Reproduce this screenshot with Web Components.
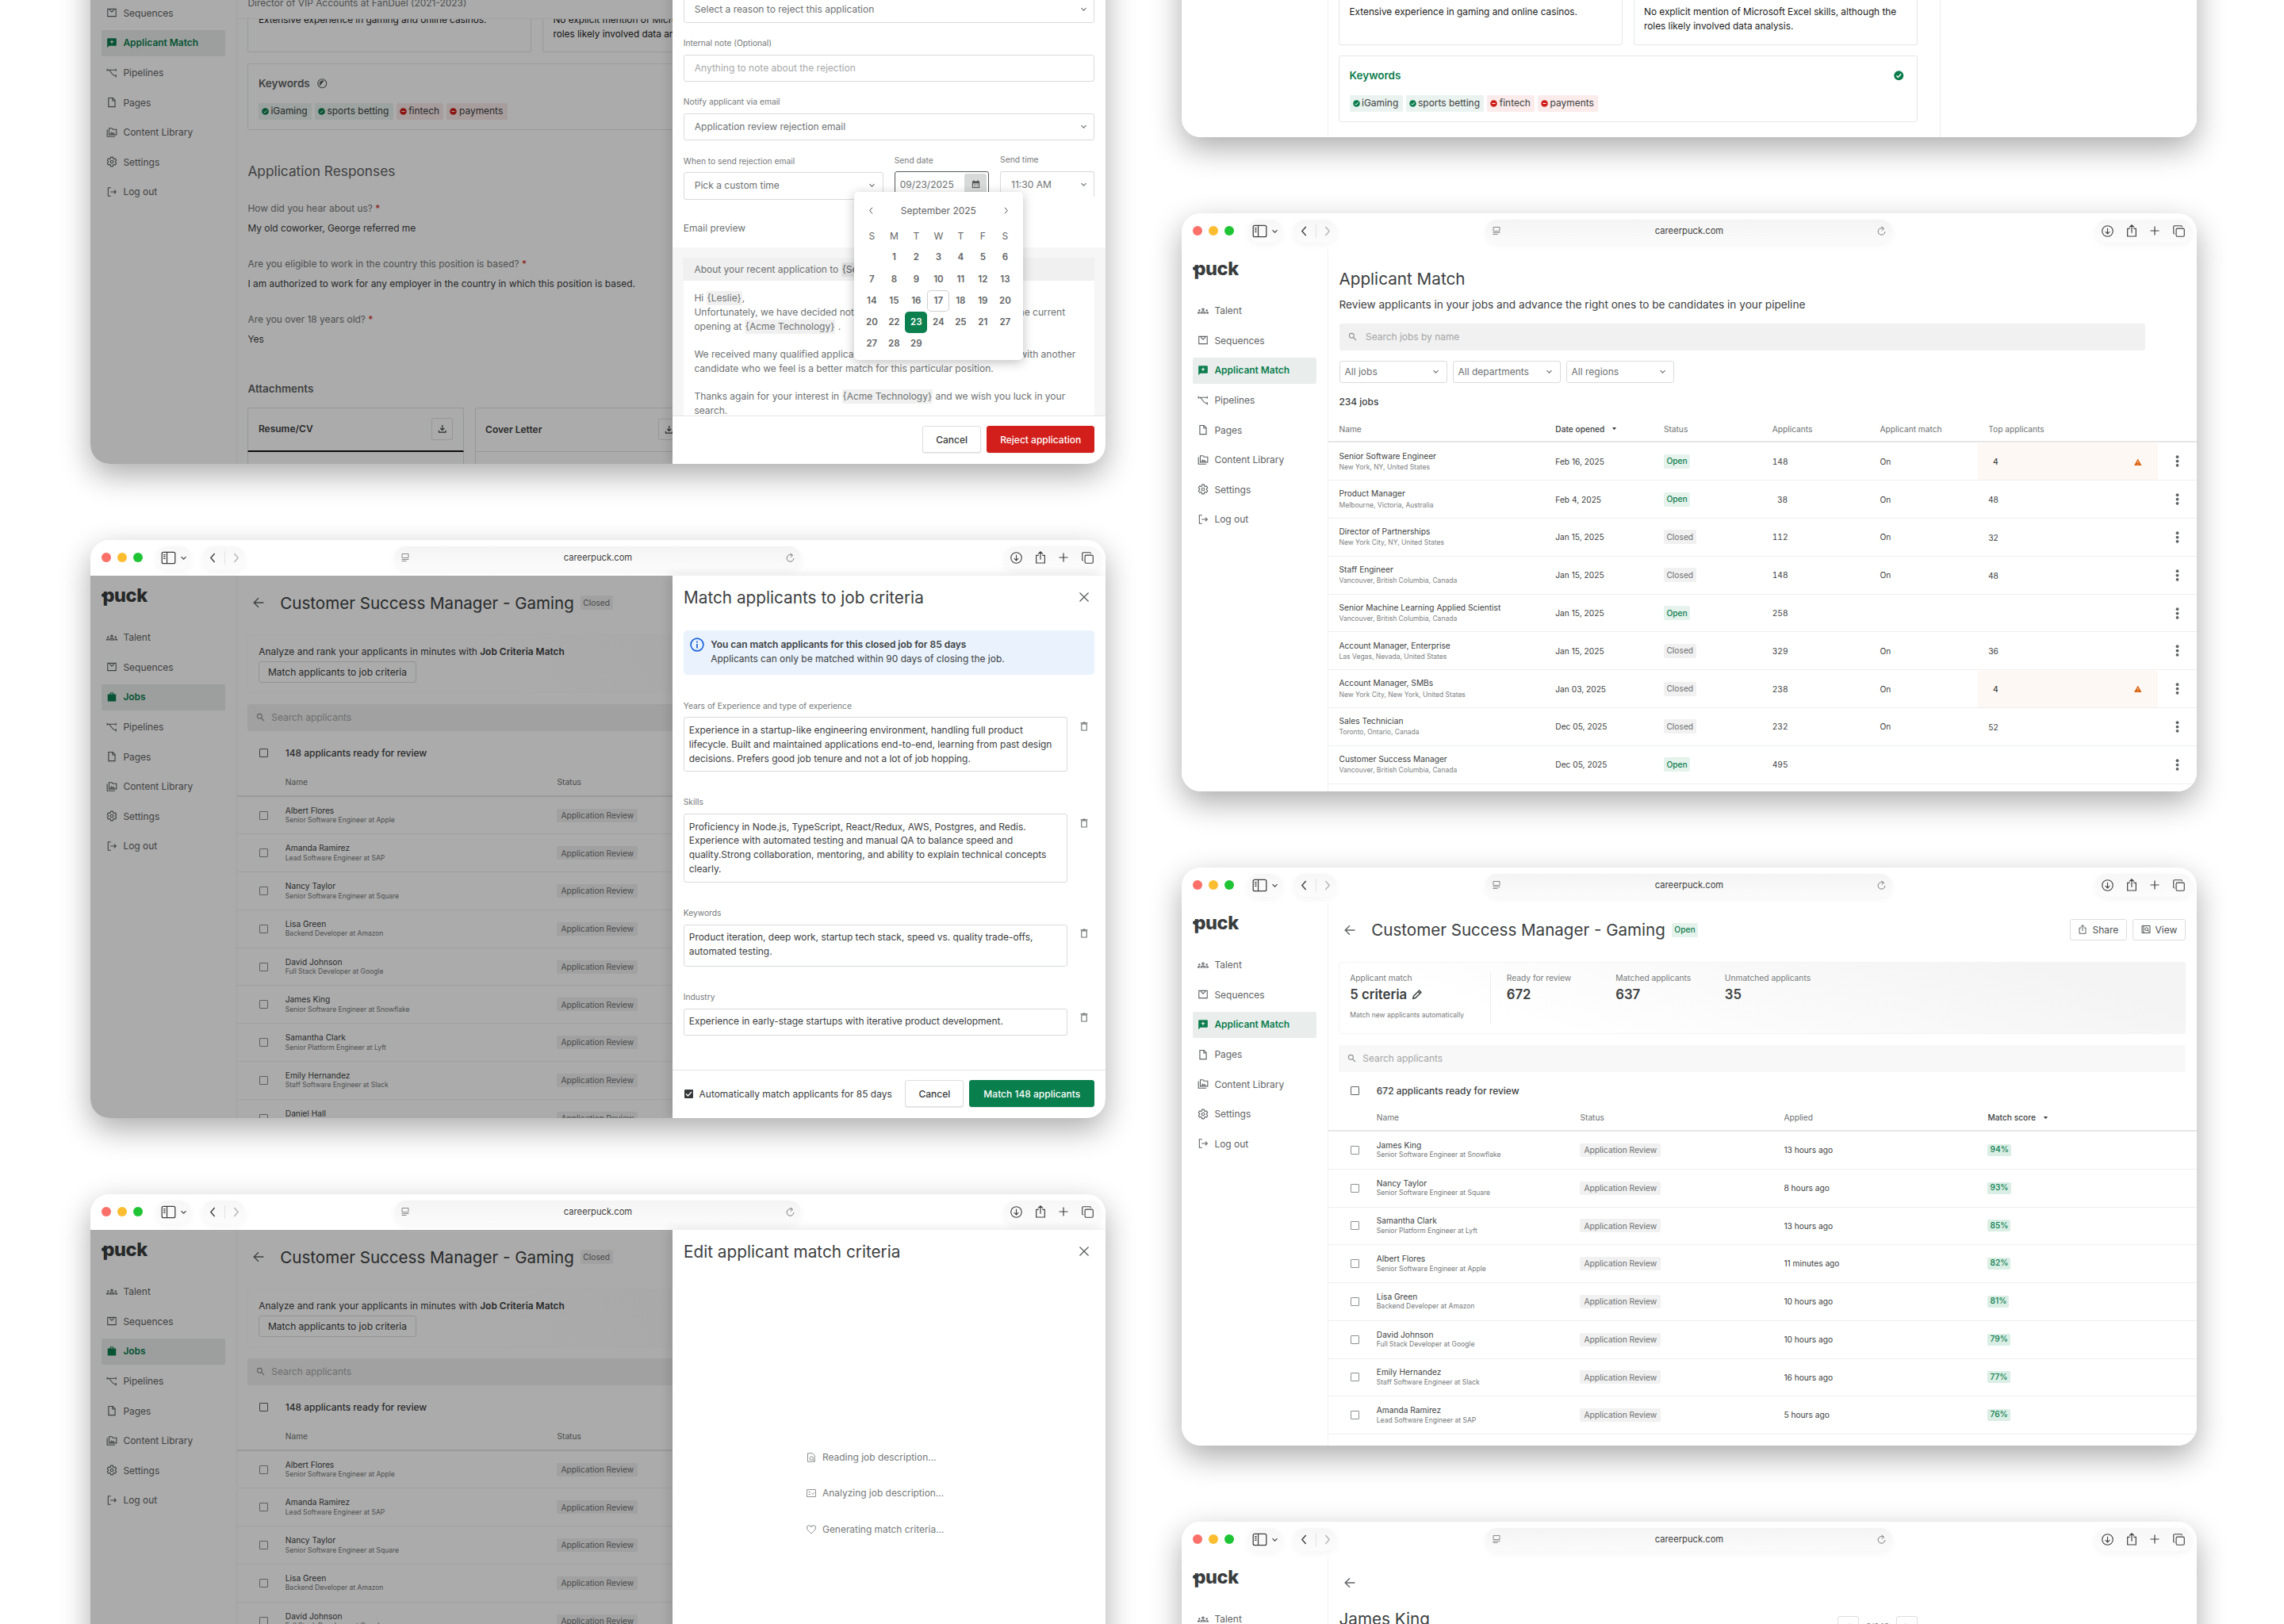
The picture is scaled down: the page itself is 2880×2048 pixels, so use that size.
<!DOCTYPE html>
<html lang="en">
<head>
<meta charset="utf-8">
<title>Puck</title>
<style>
    body {
        margin: 0;
        width: 2880px;
        height: 2048px;
        overflow: hidden;
        background: #fff;
        font-family: Inter, "Liberation Sans", sans-serif;
        color: #3c4041;
    }

    screen-board {
        --green: #0b7d4d;
        --ink: #3c4041;
        --muted: #75797a;
        --line: #d9dadb;
    }
</style>
</head>
<body>

<screen-board>
    <browser-window slot="left">
        <side-nav active="Applicant Match"></side-nav>
        <application-page></application-page>
        <side-drawer slot="overlay">
            <reject-form></reject-form>
            <push-button slot="footer" style="width: 73.7px">Cancel</push-button>
            <push-button slot="footer" kind="danger" style="width: 136.4px">Reject application</push-button>
        </side-drawer>
    </browser-window>

    <browser-window slot="left">
        <side-nav active="Jobs"></side-nav>
        <job-page state="closed"></job-page>
        <side-drawer slot="overlay" heading="Match applicants to job criteria">
            <criteria-form></criteria-form>
            <check-label slot="footer">Automatically match applicants for 85 days</check-label>
            <push-button slot="footer" style="width: 73.8px">Cancel</push-button>
            <push-button slot="footer" kind="primary" style="width: 158.2px">Match 148 applicants</push-button>
        </side-drawer>
    </browser-window>

    <browser-window slot="left">
        <side-nav active="Jobs"></side-nav>
        <job-page state="closed"></job-page>
        <side-drawer slot="overlay" heading="Edit applicant match criteria">
            <progress-steps></progress-steps>
        </side-drawer>
    </browser-window>

    <browser-window slot="right">
        <side-nav active="Applicant Match"></side-nav>
        <evaluation-page></evaluation-page>
    </browser-window>

    <browser-window slot="right">
        <side-nav active="Applicant Match"></side-nav>
        <match-page></match-page>
    </browser-window>

    <browser-window slot="right">
        <side-nav active="Applicant Match" hide="Pipelines"></side-nav>
        <job-page state="open"></job-page>
    </browser-window>

    <browser-window slot="right">
        <side-nav active="Applicant Match"></side-nav>
        <profile-page></profile-page>
    </browser-window>
</screen-board>

<script>
// Every element renders once, from its attributes, into an open shadow root
class PuckElement extends HTMLElement {
    connectedCallback() {
        if (this.shadowRoot) return
        const shadowRoot = this.attachShadow({mode: "open"})
        shadowRoot.innerHTML = /* html */`
            <style>
                :host { display: block; box-sizing: border-box; }
                * { box-sizing: border-box; }
                p, h1, h2, h3 { margin: 0; font-weight: 400; }
            </style>
            ${this.render()}
        `
    }
}

const stroke = (d, width = 2) =>
    `<path d="${d}" fill="none" stroke="currentColor" stroke-width="${width}"/>`

const GEAR = "M19.43 12.98c.04-.32.07-.64.07-.98 0-.34-.03-.66-.07-.98l2.11-1.65c.19-.15.24-.42.12-.64l-2-3.46c-.09-.16-.26-.25-.44-.25-.06 0-.12.01-.17.03l-2.49 1c-.52-.4-1.08-.73-1.69-.98l-.38-2.65C14.46 2.18 14.25 2 14 2h-4c-.25 0-.46.18-.49.42l-.38 2.65c-.61.25-1.17.59-1.69.98l-2.49-1c-.06-.02-.12-.03-.18-.03-.17 0-.34.09-.43.25l-2 3.46c-.13.22-.07.49.12.64l2.11 1.65c-.04.32-.07.65-.07.98 0 .33.03.66.07.98l-2.11 1.65c-.19.15-.24.42-.12.64l2 3.46c.09.16.26.25.44.25.06 0 .12-.01.17-.03l2.49-1c.52.4 1.08.73 1.69.98l.38 2.65c.03.24.24.42.49.42h4c.25 0 .46-.18.49-.42l.38-2.65c.61-.25 1.17-.59 1.69-.98l2.49 1c.06.02.12.03.18.03.17 0 .34-.09.43-.25l2-3.46c.12-.22.07-.49-.12-.64l-2.11-1.65z"

const ICONS = {
    talent: `<path fill-rule="evenodd" d="M12 12.75c1.63 0 3.07.39 4.24.9 1.08.48 1.76 1.56 1.76 2.73V18H6v-1.61c0-1.18.68-2.26 1.76-2.73 1.17-.52 2.61-.91 4.24-.91zM4 13c1.1 0 2-.9 2-2s-.9-2-2-2-2 .9-2 2 .9 2 2 2zm1.13 1.1c-.37-.06-.74-.1-1.13-.1-.99 0-1.93.21-2.78.58C.48 14.9 0 15.62 0 16.43V18h4.5v-1.61c0-.83.23-1.61.63-2.29zM20 13c1.1 0 2-.9 2-2s-.9-2-2-2-2 .9-2 2 .9 2 2 2zm4 3.43c0-.81-.48-1.53-1.22-1.85-.85-.37-1.79-.58-2.78-.58-.39 0-.76.04-1.13.1.4.68.63 1.46.63 2.29V18H24v-1.57zM12 6c1.66 0 3 1.34 3 3s-1.34 3-3 3-3-1.34-3-3 1.34-3 3-3zM8.07 16.2c.2-.5 2-1.4 3.93-1.4s3.7.9 3.93 1.4H8.07zM12 8c.55 0 1 .45 1 1s-.45 1-1 1-1-.45-1-1 .45-1 1-1z"/>`,
    sequences: stroke("M3 4h18v16H3zM7 5.500l5 5 5-5", 1.9),
    match: `<path fill-rule="evenodd" d="M20 2H4c-1.100 0-2 .9-2 2v18.500l4-4h14c1.100 0 2-.9 2-2V4c0-1.100-.9-2-2-2zM12 5l1.300 3.700L17 10l-3.700 1.300L12 15l-1.300-3.700L7 10l3.700-1.300z"/>`,
    jobs: `<path d="M20 6h-4V4c0-1.110-.89-2-2-2h-4c-1.110 0-2 .89-2 2v2H3v15.500h18V6zm-6 0h-4V4h4v2z"/>`,
    pipelines: stroke("M2 3v5M2 5.500h19M21 3v5M5 5.500c5 1 7 13 16 13M21 15.500v6", 1.9),
    pages: stroke("M5 2.500h9l5 5V21.500H5zM13.500 3v5.500H19", 2),
    library: stroke("M2 6v15h17M6 3h6l2 2.500h8V17H6z", 1.9) + `<path d="M8 15l3.200-4.500 2.300 3 1.800-2 3.200 3.500z"/>`,
    settings: stroke(GEAR, 1.9) + `<circle cx="12" cy="12" r="3" fill="none" stroke="currentColor" stroke-width="1.900"/>`,
    logout: stroke("M10 3H4v18h6M9 12h12M17 8l4 4-4 4", 1.9),
    sidebar: `<rect x="1.500" y="3" width="21" height="18" rx="2.500" fill="none" stroke="currentColor" stroke-width="1.600"/>` + stroke("M9.500 3v18M4 7h3M4 10h3M4 13h3", 1.6),
    reader: stroke("M4 3h16v10H4zM3 17h18M3 21h12", 1.7),
    reload: stroke("M17 6.500A8 8 0 1 0 20 13M12 1.500l5.500 4.500-5 4.500", 1.8),
    download: `<circle cx="12" cy="12" r="10.800" fill="none" stroke="currentColor" stroke-width="1.800"/>` + stroke("M12 6v11M7.500 13l4.500 4.500 4.500-4.500", 1.8),
    share: stroke("M8.500 8H4v14.500h16V8h-4.500M12 16V1.500M7.500 5.500L12 1.200l4.500 4.300", 1.8),
    plus: stroke("M12 1v22M1 12h22", 2.4),
    tabs: `<rect x="6.500" y="6.500" width="16.300" height="16.300" rx="2.500" fill="none" stroke="currentColor" stroke-width="1.800"/>` + stroke("M3.500 17.500H3a1.800 1.800 0 0 1-1.800-1.800V3A1.800 1.800 0 0 1 3 1.200h13.500A1.800 1.800 0 0 1 18.300 3v.5", 1.8),
    left: stroke("M16 2L7 12l9 10", 2.6),
    right: stroke("M8 2l9 10-9 10", 2.6),
    down: stroke("M4 8.500l8 8 8-8", 3.2),
    back: stroke("M23 12H2.500M12 2L2 12l10 10", 2.3),
    close: stroke("M2.500 2.500l19 19M21.500 2.500l-19 19", 2.1),
    search: `<circle cx="9.500" cy="9.500" r="6.500" fill="none" stroke="currentColor" stroke-width="2.200"/>` + stroke("M14.500 14.500L22 22", 2.6),
    trash: stroke("M5.500 6h13v16h-13zM3 3.500h18M9 2h6", 2.2),
    info: `<circle cx="12" cy="12" r="10.500" fill="none" stroke="currentColor" stroke-width="2.200"/>` + stroke("M12 10.500V18M12 6v2.500", 2.3),
    tick: `<circle cx="12" cy="12" r="11.500"/><path d="M6.500 12.500l3.800 3.800 7.200-8" fill="none" stroke="#fff" stroke-width="2.600"/>`,
    minus: `<circle cx="12" cy="12" r="11.500"/><path d="M6.500 12h11" stroke="#fff" stroke-width="2.600"/>`,
    partial: `<circle cx="12" cy="12" r="10.500" fill="none" stroke="currentColor" stroke-width="2.200"/><path d="M6 17c-2-5 0-11 6-12h5.500L6 18z"/>`,
    save: stroke("M12 2v13M6.500 10l5.500 5.500 5.500-5.500M3 16v5h18v-5", 2.4),
    calendar: `<path fill-rule="evenodd" d="M5 1h3v2h8V1h3v2h3v19H2V3h3zM4.300 9v10.700h15.400V9z"/>` + stroke("M6.500 12h2M11 12h2M15.500 12h2M6.500 16.500h2M11 16.500h2M15.500 16.500h2", 2.3),
    pencil: stroke("M3 21l1.200-5.200L16.500 3.500l4 4L8.200 19.800zM14 6l4 4", 2.4),
    view: stroke("M2 3h20v18H2zM6 3v18M20 18.500l-4-4.500", 2) + `<circle cx="13.500" cy="11.500" r="3.800" fill="none" stroke="currentColor" stroke-width="2"/>`,
    reading: stroke("M3 1.500h12l5.500 5.500v15.500H3zM20 21.500l-4-4", 1.9) + `<circle cx="12.500" cy="14" r="4.300" fill="none" stroke="currentColor" stroke-width="1.900"/>`,
    analyzing: stroke("M1 3h22v18H1zM5 9h5M5 15h5M13 12.500l2.500 2.500 4.500-5", 1.8),
    heart: stroke("M12 22C5 15.500 1 12 1 8A5.500 5.500 0 0 1 12 6a5.500 5.500 0 0 1 11 2c0 4-4 7.500-11 14z", 1.9),
    warning: `<path d="M12 1.500l12 21H0z"/><path d="M12 9v6M12 17.500v2.500" stroke="#fff" stroke-width="2"/>`,
    sort: `<path d="M3 7h18l-9 11z"/>`,
    dots: `<circle cx="12" cy="3.500" r="3"/><circle cx="12" cy="12" r="3"/><circle cx="12" cy="20.500" r="3"/>`
}

customElements.define("puck-icon", class extends PuckElement {
    render() {
        const size = this.getAttribute("size") || 14
        return /* html */`
            <style>
                :host { flex: none; width: ${size}px; height: ${size}px; }
                svg { display: block; overflow: visible; }
            </style>
            <svg width="${size}" height="${size}" viewBox="0 0 24 24" fill="currentColor">${ICONS[this.getAttribute("name")]}</svg>
        `
    }
})

customElements.define("screen-board", class extends PuckElement {
    render() {
        return /* html */`
            <style>
                :host {
                    display: grid;
                    grid-template-columns: 1280px 1280px;
                    column-gap: 96px;
                    padding-left: 114px;
                    height: 2048px;
                    overflow: hidden;
                }
                div { display: flex; flex-direction: column; gap: 96px; }
                .left { margin-top: -144px; }
                .right { margin-top: -556px; }
            </style>
            <div class="left"><slot name="left"></slot></div>
            <div class="right"><slot name="right"></slot></div>
        `
    }
})

customElements.define("browser-window", class extends PuckElement {
    render() {
        return /* html */`
            <style>
                :host {
                    flex: none;
                    height: 729px;
                    border-radius: 24px;
                    box-shadow: 0 14px 38px rgba(0, 0, 0, .33);
                }
                .frame { height: 729px; border-radius: 24px; overflow: hidden; background: #fff; }
                header {
                    display: flex;
                    align-items: center;
                    height: 45px;
                    padding: 0 6px 1px 14.400px;
                    color: #404040;
                }
                .lights { display: flex; gap: 7.600px; width: 68.600px; }
                .lights i { width: 12px; height: 12px; border-radius: 50%; background: #fb7069; }
                .lights i:nth-child(2) { background: #fdbd30; }
                .lights i:nth-child(3) { background: #1fc435; }
                .pill {
                    display: flex;
                    align-items: center;
                    height: 29px;
                    border-radius: 15px;
                    background: linear-gradient(#f7f7f7, #fcfcfc);
                    box-shadow: 0 3px 10px rgba(0, 0, 0, .045);
                }
                .panel { width: 44.500px; padding-left: 6.500px; gap: 5px; }
                .history { width: 54px; margin-left: 14px; padding-left: 7px; gap: 7.300px; }
                .history i { width: 1px; height: 17px; background: #e4e4e4; }
                .forward { color: #b5b5b5; }
                .address {
                    width: 513px;
                    margin-left: 188px;
                    padding: 0 7px 0 8px;
                    justify-content: space-between;
                    font-size: 11.200px;
                    color: #404040;
                    background: linear-gradient(#f4f4f4, #fbfbfb);
                }
                .address puck-icon { color: #777; }
                .actions { width: 122px; margin-left: auto; padding: 0 9.500px 0 7.500px; gap: 15px; }
                .actions puck-icon:nth-child(3) { margin: 0 1.500px 0 .5px; }
                .body { position: relative; display: flex; height: 684px; }
                ::slotted(:not(side-nav):not(side-drawer)) { flex: 1; min-width: 0; }
            </style>
            <div class="frame">
                <header>
                    <div class="lights"><i></i><i></i><i></i></div>
                    <div class="pill panel"><puck-icon name="sidebar" size="19"></puck-icon><puck-icon name="down" size="9"></puck-icon></div>
                    <div class="pill history">
                        <puck-icon name="left" size="13"></puck-icon><i></i>
                        <puck-icon class="forward" name="right" size="13"></puck-icon>
                    </div>
                    <div class="pill address">
                        <puck-icon name="reader" size="12"></puck-icon>
                        <span>careerpuck.com</span>
                        <puck-icon name="reload" size="13"></puck-icon>
                    </div>
                    <div class="pill actions">
                        <puck-icon name="download" size="15"></puck-icon>
                        <puck-icon name="share" size="16"></puck-icon>
                        <puck-icon name="plus" size="12"></puck-icon>
                        <puck-icon name="tabs" size="15"></puck-icon>
                    </div>
                </header>
                <div class="body">
                    <slot></slot>
                    <slot name="overlay"></slot>
                </div>
            </div>
        `
    }
})

customElements.define("side-nav", class extends PuckElement {
    render() {
        const active = this.getAttribute("active")
        const hidden = this.getAttribute("hide")
        const items = [
            ["talent", "Talent"],
            ["sequences", "Sequences"],
            active === "Jobs" ? ["jobs", "Jobs"] : ["match", "Applicant Match"],
            ["pipelines", "Pipelines"],
            ["pages", "Pages"],
            ["library", "Content Library"],
            ["settings", "Settings"],
            ["logout", "Log out"]
        ].filter(item => item[1] !== hidden)

        return /* html */`
            <style>
                :host {
                    flex: none;
                    width: 185px;
                    padding: 10.800px 14px 0;
                    border-right: 1px solid #f1f1f1;
                    font-size: 11.980px;
                    color: #5f6364;
                }
                .logo {
                    position: relative;
                    height: 28px;
                    margin-bottom: 22.800px;
                    padding-left: 1.500px;
                    font: 800 23.500px/28px Inter, sans-serif;
                    letter-spacing: -.4px;
                    color: #393c3d;
                }
                .logo::before {
                    content: "";
                    position: absolute;
                    left: -.5px;
                    top: 11.500px;
                    width: 6px;
                    height: 5px;
                    border-radius: 50%;
                    background: currentColor;
                }
                a {
                    display: flex;
                    align-items: center;
                    gap: 7px;
                    height: 33px;
                    margin-bottom: 4.600px;
                    padding: 0 0 .6px 6.400px;
                    border-radius: 2px;
                }
                .active { background: #e9edec; color: var(--green); font-weight: 600; }
            </style>
            <div class="logo">puck</div>
            ${items.map(([icon, label]) => `
                <a class="${label === active ? "active" : ""}"><puck-icon name="${icon}"></puck-icon>${label}</a>
            `).join("")}
        `
    }
})

customElements.define("side-drawer", class extends PuckElement {
    render() {
        const heading = this.getAttribute("heading")
        return /* html */`
            <style>
                /* the scrim lies over the page, the drawer sits at its right */
                :host {
                    position: absolute;
                    inset: 0;
                    display: flex;
                    justify-content: flex-end;
                    background: rgba(0, 0, 0, .33);
                }
                .drawer {
                    display: flex;
                    flex-direction: column;
                    width: 546px;
                    background: #fff;
                    box-shadow: -4px 0 12px rgba(0, 0, 0, .12);
                }
                .head {
                    flex: none;
                    display: flex;
                    align-items: center;
                    justify-content: space-between;
                    height: 54px;
                    padding: 0 20px 0 14px;
                    color: #55595a;
                }
                h2 { font-size: 20.750px; color: var(--ink); }
                .content { flex: 1; min-height: 0; overflow: hidden; }
                footer {
                    flex: none;
                    display: flex;
                    align-items: center;
                    justify-content: flex-end;
                    gap: 7px;
                    height: 61.500px;
                    padding: 0 13.600px 1px;
                    border-top: 1px solid #e4e4e4;
                }
            </style>
            <div class="drawer">
                ${heading ? `<div class="head"><h2>${heading}</h2><puck-icon name="close" size="14"></puck-icon></div>` : ""}
                <div class="content"><slot></slot></div>
                ${this.querySelector("[slot=footer]") ? `<footer><slot name="footer"></slot></footer>` : ""}
            </div>
        `
    }
})

customElements.define("push-button", class extends PuckElement {
    render() {
        return /* html */`
            <style>
                :host {
                    display: flex;
                    align-items: center;
                    justify-content: center;
                    flex: none;
                    gap: 6px;
                    height: 34.400px;
                    border: 1px solid #dcdddd;
                    border-radius: 3px;
                    background: #fff;
                    font-size: 12px;
                    font-weight: 500;
                    color: #36393a;
                    box-shadow: 0 1px 1px rgba(0, 0, 0, .08);
                }
                :host([small]) { height: 27.400px; font-weight: 400; box-shadow: none; }
                :host([kind=danger]) { background: #d21f1b; border-color: #d21f1b; color: #fff; }
                :host([kind=primary]) { background: #0a7f4e; border-color: #0a7f4e; color: #fff; }
            </style>
            <slot></slot>
        `
    }
})

customElements.define("check-label", class extends PuckElement {
    render() {
        return /* html */`
            <style>
                :host { display: flex; align-items: center; gap: 8px; margin-right: auto; font-size: 11.950px; }
                i { width: 11px; height: 11px; border-radius: 1px; background: #36393a; margin-left: 1px; }
                svg { display: block; }
            </style>
            <i><svg width="11" height="11" viewBox="0 0 11 11"><path d="M2 5.500l2.500 2.500L9 3" fill="none" stroke="#fff" stroke-width="1.300"/></svg></i>
            <slot></slot>
        `
    }
})

customElements.define("status-badge", class extends PuckElement {
    render() {
        return /* html */`
            <style>
                :host {
                    display: inline-flex;
                    align-items: center;
                    justify-self: start;
                    height: 18px;
                    padding: 0 3.500px 1px;
                    border-radius: 2px;
                    background: #f1f1f1;
                    font-size: 10.240px;
                    color: #6b6f70;
                }
                :host([tone=open]) { background: #e6f2ec; color: var(--green); font-weight: 500; }
                :host([tone=stage]) { height: 17px; padding: 0 5px; }
                :host([tone=score]) { height: 15px; padding: 0 3px 2px; background: #daeee5; color: var(--green); font-weight: 500; }
            </style>
            <slot></slot>
        `
    }
})

customElements.define("text-field", class extends PuckElement {
    render() {
        const label = this.getAttribute("label")
        const icon = this.hasAttribute("plain") ? "" : `<puck-icon name="down" size="9"></puck-icon>`
        return /* html */`
            <style>
                label { display: block; margin-bottom: 7.600px; font-size: 10.240px; line-height: 14px; color: var(--muted); }
                div {
                    display: flex;
                    align-items: center;
                    justify-content: space-between;
                    height: 34.400px;
                    padding: 0 8.500px 1px 13px;
                    border: 1px solid var(--line);
                    border-radius: 3px;
                    font-size: 12px;
                    color: #6d7172;
                }
                :host([plain]) div { color: #a6a8a9; }
                :host([small]) div { height: 28.400px; padding-left: 6px; }
                :host([cut]) div { height: 32.500px; padding-bottom: 0; border-bottom: 0; border-radius: 3px 3px 0 0; }
            </style>
            ${label ? `<label>${label}</label>` : ""}
            <div><slot></slot>${icon}</div>
        `
    }
})

customElements.define("search-box", class extends PuckElement {
    render() {
        return /* html */`
            <style>
                :host {
                    display: flex;
                    align-items: center;
                    height: 34px;
                    padding: 0 0 2px 11px;
                    border-radius: 3px;
                    background: #f1f1f1;
                    font-size: 11.950px;
                    color: #a3a5a6;
                }
                puck-icon { margin: 1px var(--search-gap, 8px) 0 0; color: #8b8e8f; }
            </style>
            <puck-icon name="search" size="11"></puck-icon>
            <slot></slot>
        `
    }
})

customElements.define("date-picker", class extends PuckElement {
    render() {
        const days = ["", 1, 2, 3, 4, 5, 6, 7, 8, 9, 10, 11, 12, 13, 14, 15, 16, 17, 18, 19, 20,
            20, 22, 23, 24, 25, 21, 27, 27, 28, 29]
        return /* html */`
            <style>
                :host {
                    width: 213.500px;
                    height: 212.400px;
                    padding: 13px 8px 0;
                    border-radius: 5px;
                    background: #fff;
                    box-shadow: 0 3px 14px rgba(0, 0, 0, .25);
                    font-size: 12px;
                    color: #5f6364;
                }
                header { display: flex; justify-content: space-between; align-items: center; height: 22px; padding: 0 9.500px; }
                header puck-icon { color: #444; }
                .grid { display: grid; grid-template-columns: repeat(7, 28px); justify-content: center; text-align: center; }
                .week { line-height: 22px; margin-top: 10px; }
                .days { grid-auto-rows: 27.250px; margin-top: 2.500px; font-size: 11.500px; font-weight: 600; line-height: 27px; }
                .today { box-shadow: inset 0 0 0 1px #cfd1d1; border-radius: 5px; }
                .picked { background: #0b7f4e; color: #fff; border-radius: 5px; }
            </style>
            <header><puck-icon name="left" size="9"></puck-icon><span>September 2025</span><puck-icon name="right" size="9"></puck-icon></header>
            <div class="grid week">${[..."SMTWTFS"].map(day => `<span>${day}</span>`).join("")}</div>
            <div class="grid days">
                ${days.map(day => `<span class="${day === 17 ? "today" : day === 23 ? "picked" : ""}">${day}</span>`).join("")}
            </div>
        `
    }
})

customElements.define("date-field", class extends PuckElement {
    render() {
        return /* html */`
            <style>
                label { display: block; margin-bottom: 7.300px; font-size: 10.240px; line-height: 14px; color: var(--muted); }
                .box {
                    position: relative;
                    display: flex;
                    justify-content: space-between;
                    height: 34.400px;
                    padding: 2px 2px 2px 6px;
                    border: 1px solid #55595a;
                    border-radius: 3px;
                    font-size: 12px;
                    line-height: 28.500px;
                    color: #6d7172;
                }
                .button { width: 27.700px; padding: 8px 8.500px; border-radius: 3px; background: #d8d9d9; color: #4c5051; }
                date-picker { position: absolute; left: -52.200px; top: 24.700px; z-index: 1; }
            </style>
            <label>Send date</label>
            <div class="box">
                <span>09/23/2025</span>
                <span class="button"><puck-icon name="calendar" size="11"></puck-icon></span>
                <date-picker></date-picker>
            </div>
        `
    }
})

customElements.define("reject-form", class extends PuckElement {
    render() {
        return /* html */`
            <style>
                :host { padding-top: 93.700px; color: #6d7172; font-size: 12px; }
                .fields { padding: 0 13.600px 0 13.800px; }
                text-field + text-field { margin-top: 18.200px; }
                .schedule { display: grid; grid-template-columns: 252px 119.300px 119.400px; column-gap: 14px; margin-top: 18.200px; }
                .schedule > * { margin: 0; }
                .schedule date-field { margin-top: -.7px; }
                .schedule text-field + date-field + text-field { margin-top: -1.500px; }
                h3 { font-size: 12px; line-height: 18px; margin: 27.700px 0 14.300px; }
                .preview { height: 212px; padding: 13.300px 13.600px 0 13.800px; background: #f6f6f6; overflow: hidden; }
                .subject { height: 29px; padding-left: 14.600px; margin-left: -1px; line-height: 30px; background: #f0f0f0; }
                .subject b { background: #dedfdf; color: #55595a; }
                b { font-weight: 400; padding: 1px 1px 2px; background: #f0f0f0; border-radius: 2px; }
                .mail { height: 170px; padding: 13.500px 14px 0 13.600px; background: #fff; line-height: 17.800px; }
                .split { display: flex; justify-content: space-between; white-space: nowrap; }
                .gap { height: 17.300px; }
            </style>
            <div class="fields">
                <text-field>Select a reason to reject this application</text-field>
                <text-field label="Internal note (Optional)" plain>Anything to note about the rejection</text-field>
                <text-field label="Notify applicant via email">Application review rejection email</text-field>
                <div class="schedule">
                    <text-field label="When to send rejection email">Pick a custom time</text-field>
                    <date-field></date-field>
                    <text-field label="Send time" cut>11:30 AM</text-field>
                </div>
                <h3>Email preview</h3>
            </div>
            <div class="preview">
                <div class="subject">About your recent application to <b>{Se</b></div>
                <div class="mail">
                    <p>Hi <b>{Leslie}</b>,</p>
                    <p class="split" style="width: 467.700px"><span>Unfortunately, we have decided not to</span><span>the current</span></p>
                    <p>opening at <b>{Acme Technology}</b> .</p>
                    <p class="gap"></p>
                    <p class="split" style="width: 480.800px"><span>We received many qualified applicants</span><span>with another</span></p>
                    <p>candidate who we feel is a better match for this particular position.</p>
                    <p class="gap"></p>
                    <p>Thanks again for your interest in <b>{Acme Technology}</b> and we wish you luck in your search.</p>
                </div>
            </div>
        `
    }
})

customElements.define("criteria-box", class extends PuckElement {
    render() {
        return /* html */`
            <style>
                :host { margin-top: 31.500px; }
                label { display: block; font-size: 10.240px; line-height: 14px; margin-bottom: 7.800px; color: var(--muted); }
                .row { display: flex; align-items: flex-start; gap: 15px; }
                .text {
                    width: 484.200px;
                    height: ${this.getAttribute("height")}px;
                    padding: 6.500px 6px 0;
                    border: 1px solid var(--line);
                    border-radius: 3px;
                    font-size: 11.930px;
                    line-height: 17.800px;
                    white-space: nowrap;
                }
                puck-icon { margin-top: 5.500px; color: #6d7172; }
            </style>
            <label>${this.getAttribute("label")}</label>
            <div class="row">
                <div class="text"><slot></slot></div>
                <puck-icon name="trash" size="12"></puck-icon>
            </div>
        `
    }
})

customElements.define("criteria-form", class extends PuckElement {
    render() {
        return /* html */`
            <style>
                :host { padding: 15.200px 13.600px 0 13.800px; }
                .notice {
                    display: flex;
                    gap: 8.500px;
                    height: 56px;
                    padding: 9px 8px;
                    border-radius: 5px;
                    background: #e9f2fd;
                    font-size: 11.950px;
                    line-height: 18px;
                }
                .notice puck-icon { color: #1c62dc; }
                .notice b { display: block; font-weight: 600; }
            </style>
            <div class="notice">
                <puck-icon name="info" size="18"></puck-icon>
                <div><b>You can match applicants for this closed job for 85 days</b>Applicants can only be matched within 90 days of closing the job.</div>
            </div>
            <criteria-box height="68.4" label="Years of Experience and type of experience">Experience in a startup-like engineering environment, handling full product<br>lifecycle. Built and maintained applications end-to-end, learning from past design<br>decisions. Prefers good job tenure and not a lot of job hopping.</criteria-box>
            <criteria-box height="86.5" label="Skills">Proficiency in Node.js, TypeScript, React/Redux, AWS, Postgres, and Redis.<br>Experience with automated testing and manual QA to balance speed and<br>quality.Strong collaboration, mentoring, and ability to explain technical concepts<br>clearly.</criteria-box>
            <criteria-box height="52.6" label="Keywords">Product iteration, deep work, startup tech stack, speed vs. quality trade-offs,<br>automated testing.</criteria-box>
            <criteria-box height="34.4" label="Industry">Experience in early-stage startups with iterative product development.</criteria-box>
        `
    }
})

customElements.define("progress-steps", class extends PuckElement {
    render() {
        const steps = [
            ["reading", "Reading job description..."],
            ["analyzing", "Analyzing job description..."],
            ["heart", "Generating match criteria..."]
        ]
        return /* html */`
            <style>
                :host { padding: 210px 0 0 169px; font-size: 11.950px; color: #75797a; }
                p { display: flex; align-items: center; gap: 8px; height: 45.300px; }
                puck-icon { margin-top: 1px; color: #85888a; }
            </style>
            ${steps.map(([icon, text]) => `<p><puck-icon name="${icon}" size="12"></puck-icon>${text}</p>`).join("")}
        `
    }
})

customElements.define("keyword-card", class extends PuckElement {
    render() {
        const met = this.hasAttribute("met")
        const words = [["iGaming", true], ["sports betting", true], ["fintech", false], ["payments", false]]
        return /* html */`
            <style>
                :host {
                    width: 729.500px;
                    height: 84px;
                    padding: 15px 16px 0 12.500px;
                    border: 1px solid #e5e6e6;
                    border-radius: 3px;
                }
                h3 {
                    display: flex;
                    align-items: center;
                    gap: 9px;
                    height: 18px;
                    font-size: 13.500px;
                    font-weight: 600;
                    color: #5f6364;
                }
                :host([met]) h3 { justify-content: space-between; color: var(--green); }
                div { display: flex; gap: 4px; margin-top: 15.500px; }
                span {
                    display: flex;
                    align-items: center;
                    gap: 2.500px;
                    height: 21px;
                    padding: 0 5.300px 1px 4px;
                    border-radius: 2px;
                    background: #eaf3ef;
                    font-size: 11.950px;
                }
                span puck-icon { color: var(--green); margin-top: 2px; }
                .missing { background: #fbebeb; }
                .missing puck-icon { color: #cf1f1c; }
            </style>
            <h3>Keywords <puck-icon name="${met ? "tick" : "partial"}" size="12.5"></puck-icon></h3>
            <div>
                ${words.map(([word, found]) => `
                    <span class="${found ? "" : "missing"}"><puck-icon name="${found ? "tick" : "minus"}" size="9"></puck-icon>${word}</span>
                `).join("")}
            </div>
        `
    }
})

customElements.define("application-page", class extends PuckElement {
    render() {
        const answers = [
            ["How did you hear about us?", "My old coworker, George referred me"],
            ["Are you eligible to work in the country this position is based?", "I am authorized to work for any employer in the country in which this position is based."],
            ["Are you over 18 years old?", "Yes"]
        ]
        return /* html */`
            <style>
                :host { font-size: 11.950px; overflow: hidden; }
                .strip {
                    display: flex;
                    align-items: flex-end;
                    height: 122.500px;
                    padding: 0 13.400px 10px;
                    border-bottom: 1px solid #eeefef;
                    line-height: 18px;
                    color: #75797a;
                }
                main { width: 756px; padding-left: 13.400px; }
                .notes { display: grid; grid-template-columns: 358px 358px; gap: 13.500px; margin-bottom: 14px; font-size: 11.800px; }
                .notes p {
                    height: 42.700px;
                    padding: 0 12.500px;
                    overflow: hidden;
                    border: 1px solid #e5e6e6;
                    border-top: 0;
                    border-radius: 0 0 3px 3px;
                    line-height: 18px;
                    color: #1b1b1b;
                }
                .notes span { display: block; margin-top: -7.600px; }
                h2 { font-size: 17.300px; line-height: 24px; margin: 39.500px 0 26.300px; color: #5f6364; }
                .question { height: 70.100px; line-height: 18px; }
                .question p:first-child { margin-bottom: 7px; color: #75797a; }
                em { color: #cf1f1c; font-style: normal; }
                h3 { font-size: 13.500px; font-weight: 600; line-height: 18px; margin: 17px 0 14.700px; color: #5f6364; }
                .files { display: grid; grid-template-columns: 272.300px 272.300px; gap: 13.900px; }
                .file {
                    display: flex;
                    align-items: center;
                    justify-content: space-between;
                    height: 56px;
                    padding: 0 12.500px 1px;
                    border: 1px solid #e0e1e1;
                    border-radius: 3px 3px 0 0;
                    font-size: 12px;
                    font-weight: 600;
                }
                .file.current { border-bottom: 2px solid #141414; }
                .file span { padding: 7px; border: 1px solid #e0e1e1; border-radius: 3px; }
                .page { height: 20px; border: solid #e0e1e1; border-width: 0 1px; }
            </style>
            <div class="strip">Director of VIP Accounts at FanDuel (2021-2023)</div>
            <main>
                <div class="notes">
                    <p><span>Extensive experience in gaming and online casinos.</span></p>
                    <p><span>No explicit mention of Microsoft Excel skills, although the roles likely involved data analysis.</span></p>
                </div>
                <keyword-card></keyword-card>
                <h2>Application Responses</h2>
                ${answers.map(([question, answer]) => `
                    <div class="question"><p>${question} <em>*</em></p><p>${answer}</p></div>
                `).join("")}
                <h3>Attachments</h3>
                <div class="files">
                    <div><div class="file current">Resume/CV <span><puck-icon name="save" size="11.500"></puck-icon></span></div><div class="page"></div></div>
                    <div><div class="file">Cover Letter <span><puck-icon name="save" size="11.500"></puck-icon></span></div><div class="page"></div></div>
                </div>
            </main>
        `
    }
})

customElements.define("evaluation-page", class extends PuckElement {
    render() {
        return /* html */`
            <style>
                :host { display: grid; grid-template-columns: 771px 1fr; padding-top: 480px; font-size: 11.800px; }
                main { padding-left: 13px; }
                aside { border-left: 1px solid #ececec; }
                .notes { display: grid; grid-template-columns: 358px 358px; gap: 13.500px; margin-bottom: 13.500px; }
                .notes p {
                    height: 87.700px;
                    padding: 36.300px 12.500px 0;
                    border: 1px solid #e5e6e6;
                    border-radius: 3px;
                    line-height: 18px;
                    color: #1b1b1b;
                }
            </style>
            <main>
                <div class="notes">
                    <p>Extensive experience in gaming and online casinos.</p>
                    <p>No explicit mention of Microsoft Excel skills, although the roles likely involved data analysis.</p>
                </div>
                <keyword-card met></keyword-card>
            </main>
            <aside></aside>
        `
    }
})

const JOBS = [
    ["Senior Software Engineer", "New York, NY, United States", "Feb 16, 2025", "Open", 148, "On", 4],
    ["Product Manager", "Melbourne, Victoria, Australia", "Feb 4, 2025", "Open", 38, "On", 48],
    ["Director of Partnerships", "New York City, NY, United States", "Jan 15, 2025", "Closed", 112, "On", 32],
    ["Staff Engineer", "Vancouver, British Columbia, Canada", "Jan 15, 2025", "Closed", 148, "On", 48],
    ["Senior Machine Learning Applied Scientist", "Vancouver, British Columbia, Canada", "Jan 15, 2025", "Open", 258, "", ""],
    ["Account Manager, Enterprise", "Las Vegas, Nevada, United States", "Jan 15, 2025", "Closed", 329, "On", 36],
    ["Account Manager, SMBs", "New York City, New York, United States", "Jan 03, 2025", "Closed", 238, "On", 4],
    ["Sales Technician", "Toronto, Ontario, Canada", "Dec 05, 2025", "Closed", 232, "On", 52],
    ["Customer Success Manager", "Vancouver, British Columbia, Canada", "Dec 05, 2025", "Open", 495, "", ""]
]

customElements.define("match-page", class extends PuckElement {
    render() {
        return /* html */`
            <style>
                :host { font-size: 11.950px; overflow: hidden; }
                .top { padding: 24px 0 0 13.500px; }
                h1 { font-size: 20.700px; line-height: 28px; }
                .lead { font-size: 13.650px; line-height: 18px; margin: 9px 0 15px; }
                search-box { width: 1016px; --search-gap: 11.500px; }
                .filters { display: grid; grid-template-columns: repeat(3, 136px); gap: 7px; margin-top: 13px; }
                .count { font-weight: 500; line-height: 18px; margin-top: 14.600px; }
                .row {
                    display: grid;
                    grid-template-columns: 272.800px 136.600px 136.800px 135.900px 123.700px 227px 1fr;
                    align-items: center;
                    height: 47.800px;
                    padding-left: 13.500px;
                    border-bottom: 1px solid #eeefef;
                    font-size: 10.200px;
                }
                .row.head { height: 42.500px; padding-top: 9px; border-bottom: 2px solid #e6e6e6; color: #6d7172; }
                .head b { display: flex; align-items: center; gap: 9px; font-weight: 500; color: var(--ink); }
                .name { line-height: 14.300px; }
                small { display: block; font-size: 8.530px; color: #7d8182; }
                .number { width: 19.500px; text-align: right; font-variant-numeric: tabular-nums; }
                .best {
                    display: flex;
                    align-items: center;
                    justify-content: space-between;
                    height: 46px;
                    padding: 1px 21px 0 12.500px;
                }
                .best span { width: 13px; text-align: right; }
                .low { background: #fef8f4; font-weight: 500; }
                .low puck-icon { color: #d9630f; }
                .menu { margin-left: 17px; color: #5c5f60; }
            </style>
            <div class="top">
                <h1>Applicant Match</h1>
                <p class="lead">Review applicants in your jobs and advance the right ones to be candidates in your pipeline</p>
                <search-box>Search jobs by name</search-box>
                <div class="filters">
                    <text-field small>All jobs</text-field>
                    <text-field small>All departments</text-field>
                    <text-field small>All regions</text-field>
                </div>
                <p class="count">234 jobs</p>
            </div>
            <div class="row head">
                <span>Name</span><b>Date opened <puck-icon name="sort" size="7"></puck-icon></b><span>Status</span>
                <span>Applicants</span><span>Applicant match</span><span style="padding-left: 13px">Top applicants</span>
            </div>
            ${JOBS.map(([name, place, date, status, count, match, best]) => `
                <div class="row">
                    <div class="name">${name}<small>${place}</small></div>
                    <span>${date}</span>
                    <status-badge tone="${status.toLowerCase()}">${status}</status-badge>
                    <span class="number">${count}</span>
                    <span>${match}</span>
                    <div class="best ${best === 4 ? "low" : ""}"><span>${best}</span>${best === 4 ? `<puck-icon name="warning" size="9.500"></puck-icon>` : ""}</div>
                    <puck-icon class="menu" name="dots" size="15"></puck-icon>
                </div>
            `).join("")}
        `
    }
})

const PEOPLE = {
    "Albert Flores": "Senior Software Engineer at Apple",
    "Amanda Ramirez": "Lead Software Engineer at SAP",
    "Nancy Taylor": "Senior Software Engineer at Square",
    "Lisa Green": "Backend Developer at Amazon",
    "David Johnson": "Full Stack Developer at Google",
    "James King": "Senior Software Engineer at Snowflake",
    "Samantha Clark": "Senior Platform Engineer at Lyft",
    "Emily Hernandez": "Staff Software Engineer at Slack",
    "Daniel Hall": "&nbsp;"
}

const RANKED = [
    ["James King", "13 hours ago", "94%"],
    ["Nancy Taylor", "8 hours ago", "93%"],
    ["Samantha Clark", "13 hours ago", "85%"],
    ["Albert Flores", "11 minutes ago", "82%"],
    ["Lisa Green", "10 hours ago", "81%"],
    ["David Johnson", "10 hours ago", "79%"],
    ["Emily Hernandez", "16 hours ago", "77%"],
    ["Amanda Ramirez", "5 hours ago", "76%"]
]

customElements.define("job-page", class extends PuckElement {
    render() {
        const open = this.getAttribute("state") === "open"
        const rows = open ? RANKED : Object.keys(PEOPLE).map(name => [name])
        const promo = /* html */`
            <div class="promo">
                <p>Analyze and rank your applicants in minutes with <b>Job Criteria Match</b></p>
                <push-button small style="width: 198.300px">Match applicants to job criteria</push-button>
            </div>
        `
        const stats = /* html */`
            <div class="stats">
                <div class="criteria"><p>Applicant match</p><strong>5 criteria <puck-icon name="pencil" size="14"></puck-icon></strong><small>Match new applicants automatically</small></div>
                <div><p>Ready for review</p><strong>672</strong></div>
                <div><p>Matched applicants</p><strong>637</strong></div>
                <div><p>Unmatched applicants</p><strong>35</strong></div>
            </div>
        `
        return /* html */`
            <style>
                :host { font-size: 11.950px; overflow: hidden; }
                .title { display: flex; align-items: center; height: 68px; padding: 0 14px ${open ? 1 : 0}px 20px; }
                .title > puck-icon { color: #5f6364; }
                h1 { font-size: 20.570px; margin: ${open ? 0 : 1}px 8px 0 20.300px; }
                .title push-button { color: #4c5051; }
                .share { width: 71.400px; margin: 0 7.400px 0 auto; }
                .view { width: 67px; }
                .promo, .stats, search-box { margin: 0 14px 0 13.300px; }
                .promo {
                    height: 74px;
                    margin-top: 5.500px;
                    padding: 12.500px 13px 0;
                    border: 1px solid #fbfbfb;
                    background: linear-gradient(75deg, #fff 30%, #f8f8f8);
                    line-height: 17px;
                }
                .promo b { font-weight: 600; }
                .promo push-button { margin-top: 3.500px; }
                .stats {
                    display: grid;
                    grid-template-columns: 177.500px 137.500px 137.500px 1fr;
                    height: 90.400px;
                    margin-top: 6.300px;
                    padding: 12px 13px;
                    border: 1px solid #f4f4f4;
                    border-radius: 3px;
                    background: linear-gradient(18deg, #fff 20%, #f4f4f4 85%);
                    font-size: 10.240px;
                    color: #75797a;
                }
                .stats > div:not(.criteria) { padding-left: 20px; }
                .criteria { border-right: 1px solid #ececec; }
                .stats p { line-height: 14px; }
                strong { display: flex; align-items: center; gap: 5.500px; margin: 3px 0 8.500px; font-size: 16.700px; font-weight: 600; line-height: 22px; color: var(--ink); }
                small { display: block; font-size: 8.530px; color: #75797a; }
                .stats small { line-height: 12px; }
                search-box { margin-top: 14.800px; ${open ? "background: #f8f8f8;" : ""} }
                .count, .row { display: grid; grid-template-columns: ${open ? "60.800px 256.700px 256.900px 257.100px 1fr" : "60.800px 342.700px 1fr"}; align-items: center; }
                .count { height: ${open ? 46.6 : 54.4}px; font-weight: 500; white-space: nowrap; }
                .row { height: 47.750px; border-bottom: 1px solid #eeefef; font-size: 10.200px; line-height: 12.500px; }
                .head { height: 28px; padding-bottom: 6px; border-bottom: 2px solid #e6e6e6; color: #6d7172; }
                .head b { display: flex; align-items: center; gap: 9px; font-weight: 500; color: var(--ink); }
                i { width: 11px; height: 11px; margin-left: 28px; border: 1.500px solid #8d9091; border-radius: 1px; }
                .count i { border-color: #5f6364; }
            </style>
            <div class="title">
                <puck-icon name="back"></puck-icon>
                <h1>Customer Success Manager - Gaming</h1>
                <status-badge tone="${open ? "open" : "closed"}">${open ? "Open" : "Closed"}</status-badge>
                ${open ? `
                    <push-button small class="share"><puck-icon name="share" size="12"></puck-icon>Share</push-button>
                    <push-button small class="view"><puck-icon name="view" size="12"></puck-icon>View</push-button>
                ` : ""}
            </div>
            ${open ? stats : promo}
            <search-box>Search applicants</search-box>
            <div class="count"><i></i>${open ? 672 : 148} applicants ready for review</div>
            <div class="row head">
                <span></span><span>Name</span><span>Status</span>
                ${open ? `<span>Applied</span><b>Match score <puck-icon name="sort" size="7"></puck-icon></b>` : ""}
            </div>
            ${rows.map(([name, applied, score]) => `
                <div class="row">
                    <i></i>
                    <div>${name}<small>${PEOPLE[name]}</small></div>
                    <status-badge tone="stage">Application Review</status-badge>
                    ${score ? `<span>${applied}</span><status-badge tone="score">${score}</status-badge>` : ""}
                </div>
            `).join("")}
        `
    }
})

customElements.define("profile-page", class extends PuckElement {
    render() {
        return /* html */`
            <style>
                :host { padding: 25px 0 0 13.500px; font-size: 10.240px; }
                .back { margin-left: 6.500px; color: #5f6364; }
                .line { display: flex; align-items: flex-start; justify-content: space-between; width: 729.500px; margin-top: 23.700px; }
                h1 { font-size: 20.700px; line-height: 30px; }
                .pager { display: flex; align-items: center; gap: 8.500px; margin-top: 11px; color: #75797a; }
                .pager push-button { width: 27.400px; }
            </style>
            <puck-icon class="back" name="back"></puck-icon>
            <div class="line">
                <h1>James King</h1>
                <div class="pager">
                    <push-button small><puck-icon name="left" size="9"></puck-icon></push-button>
                    <span>2/648</span>
                    <push-button small><puck-icon name="right" size="9"></puck-icon></push-button>
                </div>
            </div>
        `
    }
})
</script>
</body>
</html>
